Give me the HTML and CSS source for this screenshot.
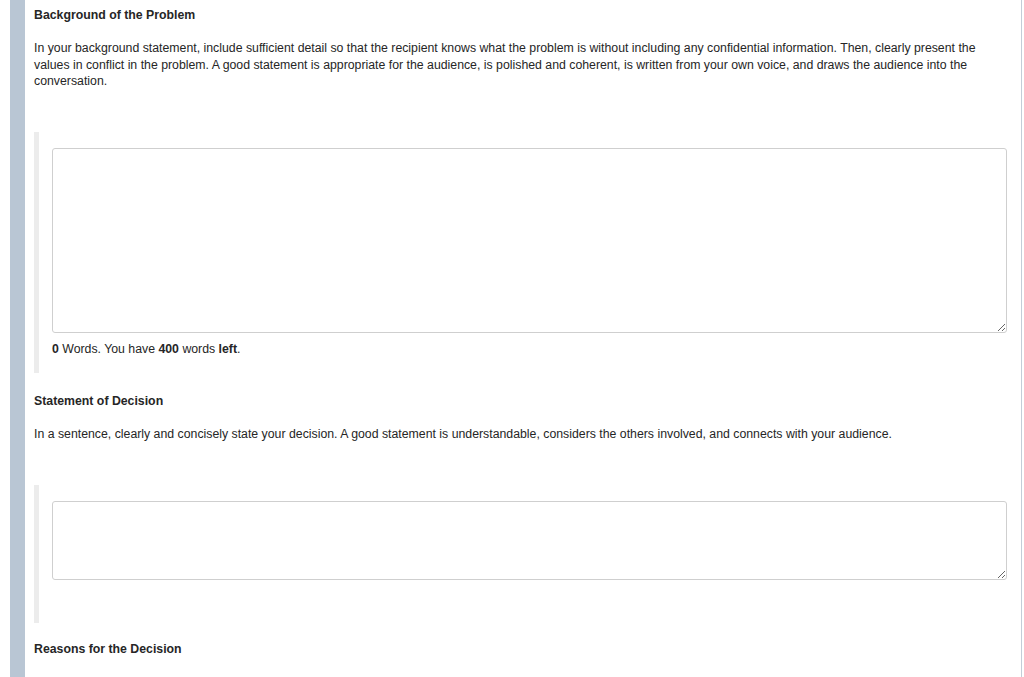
FILE: index.html
```html
<!DOCTYPE html>
<html>
<head>
<meta charset="utf-8">
<link rel="stylesheet" href="styles.css">
</head>
<body>
<div class="page">
  <section class="question">
    <h3 class="q-title">Background of the Problem</h3>
    <p class="q-text">In your background statement, include sufficient detail so that the recipient knows what the problem is without including any confidential information. Then, clearly present the values in conflict in the problem. A good statement is appropriate for the audience, is polished and coherent, is written from your own voice, and draws the audience into the conversation.</p>
    <div class="answer">
      <textarea class="field tall"></textarea>
      <div class="count"><b>0</b> Words. You have <b>400</b> words <b>left</b>.</div>
    </div>
  </section>
  <section class="question">
    <h3 class="q-title">Statement of Decision</h3>
    <p class="q-text">In a sentence, clearly and concisely state your decision. A good statement is understandable, considers the others involved, and connects with your audience.</p>
    <div class="answer second">
      <textarea class="field short"></textarea>
      <div class="count faded">&nbsp;</div>
    </div>
  </section>
  <section class="question">
    <h3 class="q-title">Reasons for the Decision</h3>
    <p class="q-text">&nbsp;</p>
  </section>
</div>
</body>
</html>
```

FILE: styles.css
```css
html, body {
  margin: 0;
  padding: 0;
  background: #ffffff;
  height: 100%;
  overflow: hidden;
}
body {
  font-family: "Liberation Sans", Arial, sans-serif;
  font-size: 12.3px;
  color: #262626;
}
.page {
  margin-left: 10px;
  width: 973px;
  min-height: 100%;
  border-left: 15px solid #b9c6d4;
  border-right: 1px solid #c3cdd8;
  padding: 7px 14px 0 9px;
  box-sizing: content-box;
}
.question {
  display: flex;
  flex-direction: column;
}
.q-title {
  margin: 0;
  font-size: 12.3px;
  font-weight: bold;
  line-height: 16px;
  color: #262626;
}
.q-text {
  margin: 17px 0 0;
  line-height: 16.5px;
}
.answer {
  margin-top: 42px;
  border-left: 5px solid #ececec;
  padding: 16px 0 16px 13px;
  display: flex;
  flex-direction: column;
}
.answer.second {
  margin-top: 43px;
  padding-bottom: 17px;
}
.field {
  display: block;
  width: 100%;
  box-sizing: border-box;
  border: 1px solid #cfcfcf;
  border-radius: 3px;
  background: #fff;
  resize: vertical;
  margin: 0;
  font-family: inherit;
}
.tall { height: 185px; }
.short { height: 79px; }
.count {
  margin-top: 8px;
  line-height: 16px;
}
.answer.second .count { margin-top: 10px; }
.count b { font-weight: bold; }
.question + .question .q-title { margin-top: 20px; }
.question:last-child .q-title { margin-top: 18px; }
```
